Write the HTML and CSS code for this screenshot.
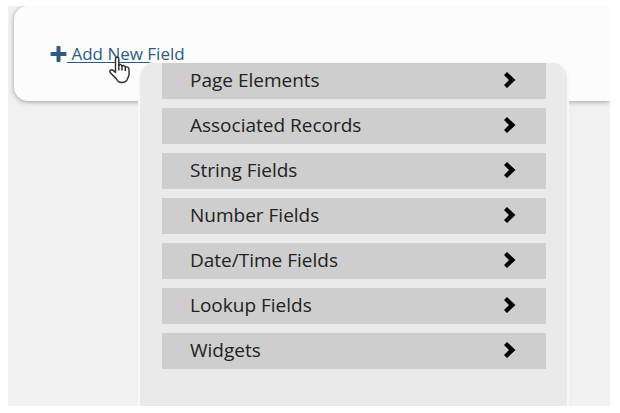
FILE: index.html
```html
<!DOCTYPE html>
<html lang="en">
<head>
  <meta charset="UTF-8">
  <meta name="viewport" content="width=device-width, initial-scale=1.0">
  <title>Add New Field</title>
  <link rel="stylesheet" href="styles.css">
</head>
<body>
  <svg class="defs" aria-hidden="true">
    <symbol id="chevron" viewBox="0 0 12 16">
      <path d="M0 3 L3 0 L11.5 8 L3 16 L0 13 L5 8 Z"/>
    </symbol>
  </svg>

  <main class="page">
    <section class="card">
      <a class="add-field" href="#field-menu">
        <svg class="plus" viewBox="0 0 16 16" aria-hidden="true">
          <path d="M6 1 Q6 0 7 0 H9 Q10 0 10 1 V6 H15 Q16 6 16 7 V9 Q16 10 15 10 H10 V15 Q10 16 9 16 H7 Q6 16 6 15 V10 H1 Q0 10 0 9 V7 Q0 6 1 6 H6 Z"/>
        </svg><span class="add-label">&nbsp;Add New Field</span>
      </a>
    </section>

    <div class="menu" id="field-menu">
      <button class="menu-item" type="button">Page Elements <svg class="chevron"><use href="#chevron"/></svg></button>
      <button class="menu-item" type="button">Associated Records <svg class="chevron"><use href="#chevron"/></svg></button>
      <button class="menu-item" type="button">String Fields <svg class="chevron"><use href="#chevron"/></svg></button>
      <button class="menu-item" type="button">Number Fields <svg class="chevron"><use href="#chevron"/></svg></button>
      <button class="menu-item" type="button">Date/Time Fields <svg class="chevron"><use href="#chevron"/></svg></button>
      <button class="menu-item" type="button">Lookup Fields <svg class="chevron"><use href="#chevron"/></svg></button>
      <button class="menu-item" type="button">Widgets <svg class="chevron"><use href="#chevron"/></svg></button>
    </div>

    <!-- hand pointer over the link -->
    <svg class="pointer" viewBox="0 0 22 28" aria-hidden="true">
      <path d="M6.5 3 C6.5 0.7 9.8 0.7 9.8 3 V9.5 C10.5 8 13 8.3 13 10.2 C14 9 16.2 9.5 16.3 11.3 C17.6 10.4 20 11 20 13.2 V18.5 C20 21 18.3 22.2 18 24 C16.5 27.2 9.5 27.2 8.3 24.3 C7.5 22 3.5 19.5 1.2 16.5 C0 14.4 2.6 13 4.2 14.4 L6.5 16.5 Z"/>
      <path d="M9.8 9 V14 M13 10 V14 M16.3 11 V14.5"/>
    </svg>
  </main>
</body>
</html>
```

FILE: styles.css
```css
body {
  margin: 0;
  padding: 6px 10px 7px 8px;
  min-height: 100vh;
  box-sizing: border-box;
  display: flex;
  background-color: #fff;
  font-family: "Open Sans", "Noto Sans", sans-serif;
}
.defs {
  position: absolute;
  width: 0;
  height: 0;
}
.page {
  position: relative;
  flex: 1;
  overflow: hidden;
  background-color: #f1f1f1;
}
.card {
  margin-left: 6px;
  padding: 36px 36px 35px;
  border-radius: 14px 0 0 14px;
  background-color: #fcfcfc;
  box-shadow: 0 1px 5px rgba(0, 0, 0, 0.35);
}
.add-field {
  display: flex;
  align-items: center;
  color: #2d5b86;
  font-size: 17px;
  line-height: 24px;
  text-decoration: none;
}
.add-label {
  text-decoration: underline;
  text-decoration-thickness: 1px;
  text-underline-offset: 2px;
}
.plus {
  width: 17px;
  height: 16px;
  fill: #2d5b86;
}
.menu {
  position: absolute;
  top: 56px;
  right: 41px;
  bottom: 0;
  left: 130px;
  display: flex;
  flex-direction: column;
  gap: 9px;
  padding: 0 21px 0 22px;
  border: 2px solid #f8f8f8;
  border-top-width: 1px;
  border-bottom: none;
  border-radius: 16px 16px 0 0;
  background-color: #eaeaea;
}
.menu-item {
  display: flex;
  align-items: center;
  justify-content: space-between;
  padding: 0 30px 3px 28px;
  height: 36px;
  flex: none;
  border: none;
  background-color: #cecece;
  color: #222;
  font-family: inherit;
  font-size: 19px;
  text-align: left;
  cursor: pointer;
}
.menu-item:hover {
  background-color: #c2c2c2;
}
.chevron {
  width: 12px;
  height: 16px;
  fill: #000;
}
.pointer {
  position: absolute;
  top: 50px;
  left: 101px;
  width: 22px;
  height: 28px;
  fill: #fff;
  stroke: #2b2b35;
  stroke-width: 1.4;
  stroke-linejoin: round;
  stroke-linecap: round;
  pointer-events: none;
}
```
